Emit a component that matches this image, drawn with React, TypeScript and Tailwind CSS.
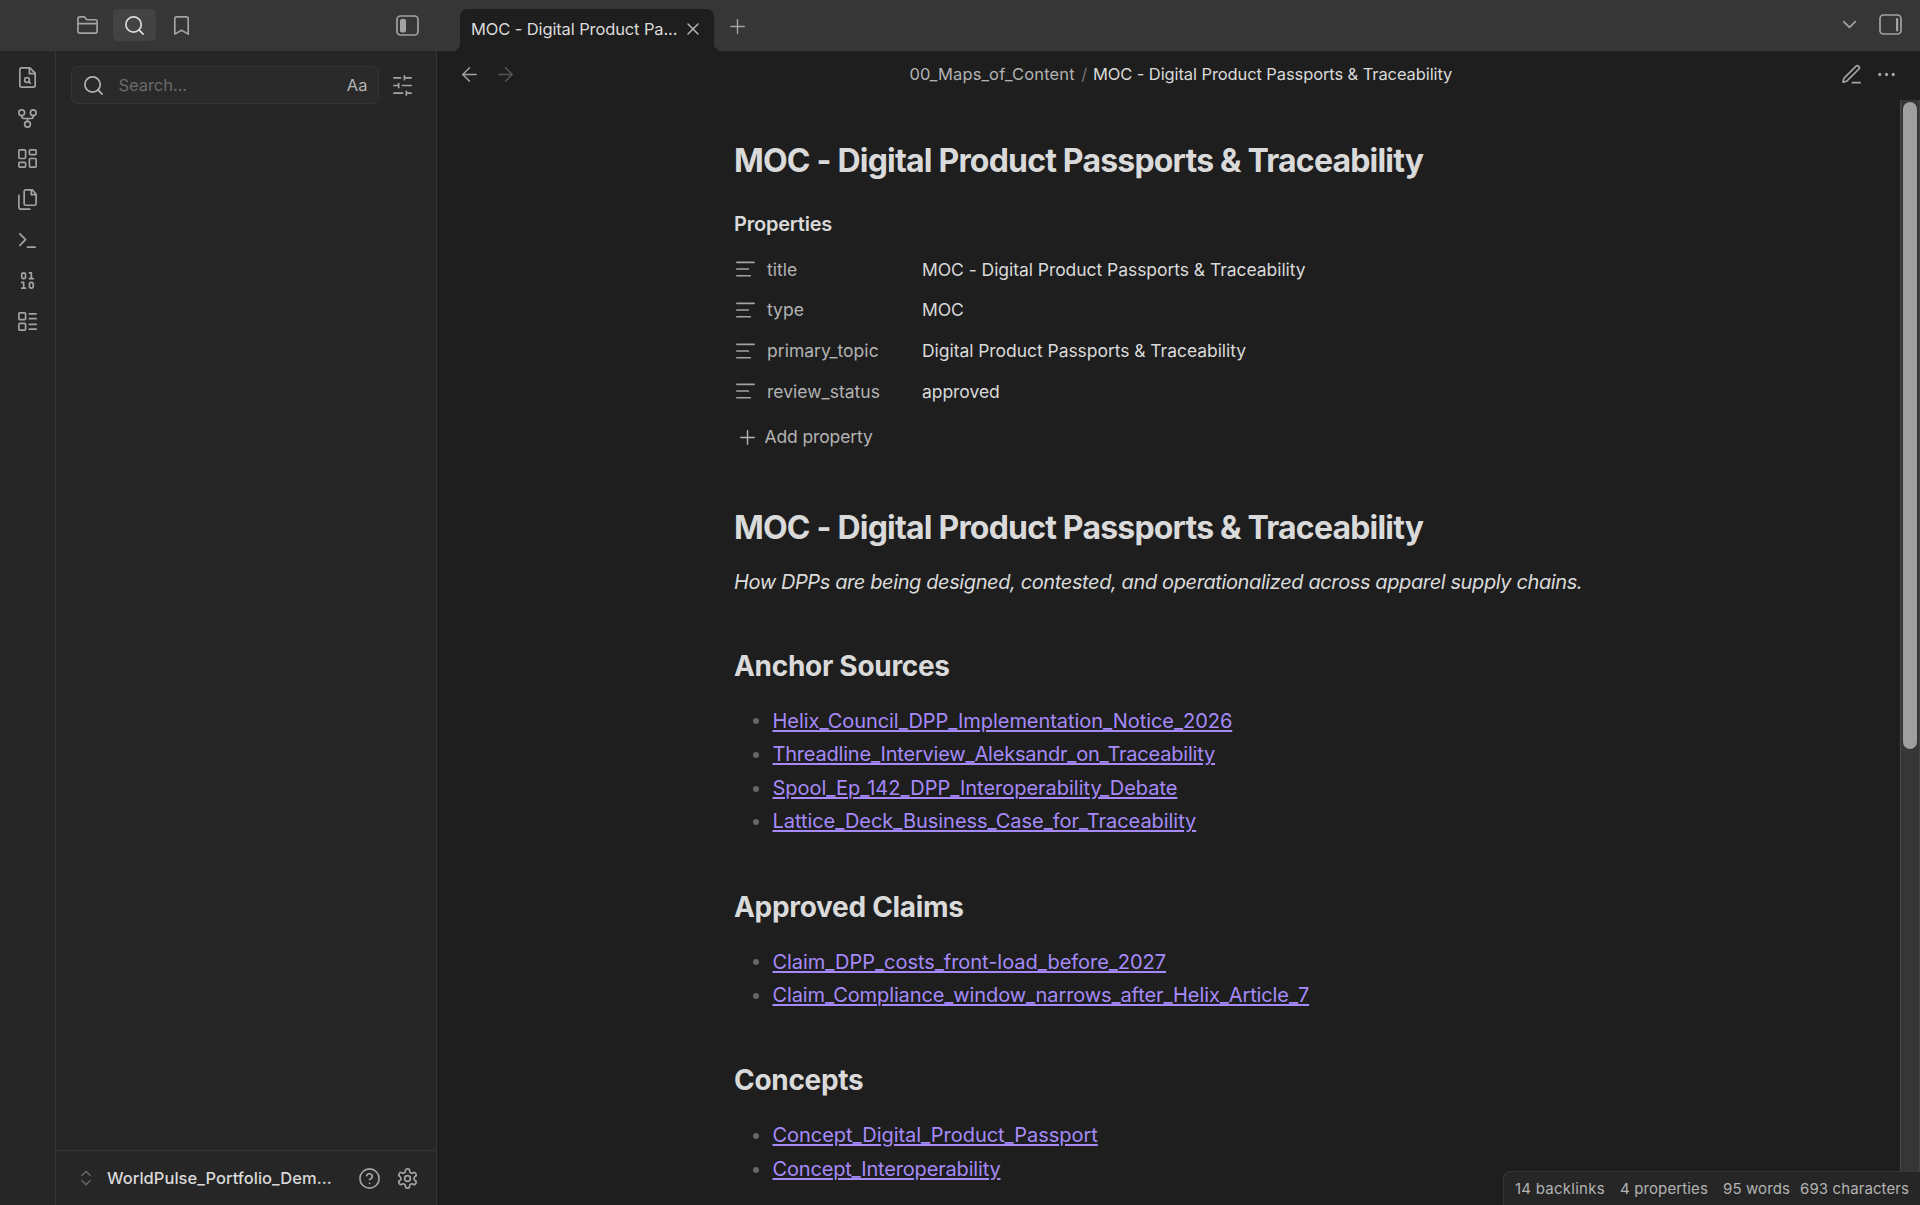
import type { ReactNode } from 'react';
import { Bookmark, ChevronDown, LayoutDashboard, Plus, Search, X, ArrowLeft, ArrowRight, ChevronsUpDown } from 'lucide-react';

interface IconProps {
  className?: string;
  children: ReactNode;
}

function Icon({ className = 'size-[23px]', children }: IconProps) {
  return (
    <svg
      viewBox="0 0 24 24"
      fill="none"
      stroke="currentColor"
      strokeWidth={1.75}
      strokeLinecap="round"
      strokeLinejoin="round"
      className={`shrink-0 ${className}`}
    >
      {children}
    </svg>
  );
}

const ribbonItems: { name: string; icon: ReactNode }[] = [
  {
    name: 'switcher',
    icon: (
      <Icon>
        <path d="M14.5 2H6a2 2 0 0 0-2 2v16a2 2 0 0 0 2 2h12a2 2 0 0 0 2-2V7.5L14.5 2z" />
        <path d="M14 2v6h6" />
        <circle cx="11.5" cy="14.5" r="2.5" />
        <path d="M13.25 16.25 15 18" />
      </Icon>
    ),
  },
  {
    name: 'graph',
    icon: (
      <Icon>
        <circle cx="12" cy="18" r="3" />
        <circle cx="6" cy="6" r="3" />
        <circle cx="18" cy="6" r="3" />
        <path d="M18 9v1a2 2 0 0 1-2 2H8a2 2 0 0 1-2-2V9" />
        <path d="M12 12v3" />
      </Icon>
    ),
  },
  { name: 'canvas', icon: <LayoutDashboard className="size-[23px]" strokeWidth={1.75} /> },
  {
    name: 'templates',
    icon: (
      <Icon>
        <path d="M17 2h-6.9c-.4 0-.8.2-1.1.5-.3.3-.5.7-.5 1.1v12.8c0 .4.2.8.5 1.1.3.3.7.5 1.1.5h9.3c.4 0 .8-.2 1.1-.5.3-.3.5-.7.5-1.1V6.5L17 2z" />
        <path d="M3 7.6v12.8c0 .4.2.8.5 1.1.3.3.7.5 1.1.5h9.8" />
        <path d="M16 2v5h5" />
      </Icon>
    ),
  },
  {
    name: 'commands',
    icon: (
      <Icon>
        <path d="m4 17 6-6-6-6" />
        <path d="M12 19h8" />
      </Icon>
    ),
  },
  {
    name: 'binary',
    icon: (
      <Icon>
        <rect x="6" y="4" width="4" height="6" rx="2" />
        <rect x="14" y="14" width="4" height="6" rx="2" />
        <path d="M6 20h4M14 10h4M6 14h2v6M14 4h2v6" />
      </Icon>
    ),
  },
  {
    name: 'bases',
    icon: (
      <Icon>
        <rect x="3" y="3" width="7" height="7" rx="1" />
        <rect x="3" y="14" width="7" height="7" rx="1" />
        <path d="M14 4h7M14 9h7M14 15h7M14 20h7" />
      </Icon>
    ),
  },
];

const properties = [
  { key: 'title', value: 'MOC - Digital Product Passports & Traceability' },
  { key: 'type', value: 'MOC' },
  { key: 'primary_topic', value: 'Digital Product Passports & Traceability' },
  { key: 'review_status', value: 'approved' },
];

const sections = [
  {
    heading: 'Anchor Sources',
    links: [
      { label: 'Helix_Council_DPP_Implementation_Notice_2026', tracking: 'tracking-[-0.05px]' },
      { label: 'Threadline_Interview_Aleksandr_on_Traceability', tracking: 'tracking-[-0.2px]' },
      { label: 'Spool_Ep_142_DPP_Interoperability_Debate', tracking: 'tracking-[-0.02px]' },
      { label: 'Lattice_Deck_Business_Case_for_Traceability', tracking: 'tracking-[-0.05px]' },
    ],
  },
  {
    heading: 'Approved Claims',
    links: [
      { label: 'Claim_DPP_costs_front-load_before_2027', tracking: 'tracking-[-0.04px]' },
      { label: 'Claim_Compliance_window_narrows_after_Helix_Article_7', tracking: 'tracking-[-0.11px]' },
    ],
  },
  {
    heading: 'Concepts',
    links: [
      { label: 'Concept_Digital_Product_Passport', tracking: 'tracking-[-0.04px]' },
      { label: 'Concept_Interoperability', tracking: 'tracking-[-0.17px]' },
    ],
  },
];

function SidebarToggle({ side }: { side: 'left' | 'right' }) {
  return (
    <svg viewBox="0 0 23 21" fill="none" className="h-[21px] w-[23px] shrink-0">
      <rect x="1" y="1" width="21" height="19" rx="3.5" stroke="currentColor" strokeWidth="1.7" />
      {side === 'left' ? (
        <rect x="4" y="4" width="6" height="13.5" rx="1.8" fill="currentColor" />
      ) : (
        <rect x="17" y="4" width="2.2" height="13.5" rx="1.1" fill="currentColor" />
      )}
    </svg>
  );
}

function TitleBar() {
  return (
    <div className="flex h-[51px] shrink-0 bg-[#363636] text-[#a3a3a3]">
      <div className="flex w-[437px] items-start">
        <div className="ml-[70px] mt-[9px] flex h-8 items-center">
          <div className="flex w-[35px] justify-center">
            <Icon>
              <path d="M20 20a2 2 0 0 0 2-2V8a2 2 0 0 0-2-2h-7.9a2 2 0 0 1-1.69-.9L9.6 3.9A2 2 0 0 0 7.93 3H4a2 2 0 0 0-2 2v13a2 2 0 0 0 2 2Z" />
              <path d="M2 10h20" />
            </Icon>
          </div>
          <div className="ml-2 flex h-8 w-[43px] items-center justify-center rounded-[5px] bg-[#434343] text-[#dadada]">
            <Search className="size-[23px]" strokeWidth={1.75} />
          </div>
          <div className="ml-[7px] flex w-[36px] justify-center">
            <Bookmark className="size-[23px]" strokeWidth={1.75} />
          </div>
        </div>
        <div className="ml-auto mr-[18px] mt-[15px]">
          <SidebarToggle side="left" />
        </div>
      </div>

      <div className="flex flex-1 items-end">
        <div className="relative ml-[23px] flex h-[42px] w-[254px] items-center rounded-t-lg bg-[#1e1e1e] pb-[2px] pl-[11px]">
          <span className="absolute -left-2 bottom-0 size-2 overflow-hidden">
            <span className="block size-2 rounded-br-lg shadow-[4px_4px_0_0_#1e1e1e]" />
          </span>
          <span className="absolute -right-2 bottom-0 size-2 overflow-hidden">
            <span className="block size-2 rounded-bl-lg shadow-[-4px_4px_0_0_#1e1e1e]" />
          </span>
          <span className="whitespace-nowrap text-[16.5px] tracking-[-0.12px] text-[#dadada]">MOC - Digital Product Pa...</span>
          <X className="ml-auto mr-[11px] size-[20px] text-[#b3b3b3]" strokeWidth={1.75} />
        </div>
        <Plus className="mb-[13px] ml-[12px] size-[23px]" strokeWidth={1.5} />
        <div className="mb-[15px] ml-auto mr-[18px] flex items-center">
          <ChevronDown className="mr-[18px] size-[23px]" strokeWidth={1.75} />
          <SidebarToggle side="right" />
        </div>
      </div>
    </div>
  );
}

function Ribbon() {
  return (
    <div className="flex w-[56px] shrink-0 flex-col items-center border-r border-[#363636] bg-[#262626] pt-[6.2px] text-[#a3a3a3]">
      {ribbonItems.map((item) => (
        <div key={item.name} className="flex h-[40.7px] items-center justify-center">
          {item.icon}
        </div>
      ))}
    </div>
  );
}

function SearchPane() {
  return (
    <div className="flex w-[381px] shrink-0 flex-col border-r border-[#363636] bg-[#262626]">
      <div className="mt-[15px] flex items-center pl-[15px]">
        <div className="flex h-[38px] w-[308px] items-center rounded-[6px] border border-[#333333] bg-[#2a2a2a] pl-[9.5px] pr-[10.5px]">
          <Search className="size-[23px] text-[#b3b3b3]" strokeWidth={1.75} />
          <span className="ml-[14px] pt-px text-[16.5px] tracking-[-0.05px] text-[#6a6a6a]">Search...</span>
          <span className="ml-auto pt-px text-[16.5px] text-[#b3b3b3]">Aa</span>
        </div>
        <Icon className="ml-[12px] size-[23px] text-[#a3a3a3]">
          <path d="M21 4h-7M10 4H3M21 12h-9M8 12H3M21 20h-5M12 20H3M14 2v4M8 10v4M16 18v4" />
        </Icon>
      </div>

      <div className="mt-auto flex h-[55px] items-center border-t border-[#363636] text-[#a3a3a3]">
        <ChevronsUpDown className="ml-[20px] size-[20px] text-[#666666]" strokeWidth={1.75} />
        <span className="ml-[11px] whitespace-nowrap text-[16.5px] font-medium tracking-[0.03px] text-[#dadada]">
          WorldPulse_Portfolio_Dem...
        </span>
        <div className="ml-auto mr-[17px] flex gap-[15px]">
          <Icon>
            <circle cx="12" cy="12" r="10" />
            <path d="M9.09 9a3 3 0 0 1 5.83 1c0 2-3 3-3 3M12 17h.01" />
          </Icon>
          <Icon>
            <path d="M12.22 2h-.44a2 2 0 0 0-2 2v.18a2 2 0 0 1-1 1.73l-.43.25a2 2 0 0 1-2 0l-.15-.08a2 2 0 0 0-2.73.73l-.22.38a2 2 0 0 0 .73 2.73l.15.1a2 2 0 0 1 1 1.72v.51a2 2 0 0 1-1 1.74l-.15.09a2 2 0 0 0-.73 2.73l.22.38a2 2 0 0 0 2.73.73l.15-.08a2 2 0 0 1 2 0l.43.25a2 2 0 0 1 1 1.73V20a2 2 0 0 0 2 2h.44a2 2 0 0 0 2-2v-.18a2 2 0 0 1 1-1.73l.43-.25a2 2 0 0 1 2 0l.15.08a2 2 0 0 0 2.73-.73l.22-.39a2 2 0 0 0-.73-2.73l-.15-.08a2 2 0 0 1-1-1.74v-.5a2 2 0 0 1 1-1.74l.15-.09a2 2 0 0 0 .73-2.73l-.22-.38a2 2 0 0 0-2.73-.73l-.15.08a2 2 0 0 1-2 0l-.43-.25a2 2 0 0 1-1-1.73V4a2 2 0 0 0-2-2z" />
            <circle cx="12" cy="12" r="3" />
          </Icon>
        </div>
      </div>
    </div>
  );
}

function ViewHeader() {
  return (
    <div className="flex h-[47px] shrink-0 items-center text-[#a3a3a3]">
      <ArrowLeft className="ml-[21px] size-[23px]" strokeWidth={1.5} />
      <ArrowRight className="ml-[13px] size-[23px] text-[#555555]" strokeWidth={1.5} />
      <div className="ml-[392.5px] flex whitespace-nowrap text-[16.5px] text-[#b3b3b3]">
        <span className="w-[166px] tracking-[0.12px]">00_Maps_of_Content</span>
        <span className="w-[17.5px] text-center text-[#777777]">/</span>
        <span className="tracking-[-0.1px] text-[#dadada]">MOC - Digital Product Passports &amp; Traceability</span>
      </div>
      <Icon className="ml-auto mr-[12px] size-[23px]">
        <path d="M13 20.5h8" />
        <path d="M16.5 3.5a2.12 2.12 0 0 1 3 3L7 19l-4 1 1-4Z" />
      </Icon>
      <Icon className="mr-[22px] size-[23px]">
        <g fill="currentColor" strokeWidth={1.4}>
          <circle cx="12" cy="12" r="1" />
          <circle cx="19" cy="12" r="1" />
          <circle cx="5" cy="12" r="1" />
        </g>
      </Icon>
    </div>
  );
}

function Note() {
  return (
    <div className="flex min-h-0 flex-1 overflow-hidden">
      <div className="w-[1463px] shrink-0 whitespace-nowrap pl-[297px] text-[#dadada]">
        <h1 className="mt-[43.2px] text-[32px] font-bold leading-10 tracking-[-0.8px]">
          MOC - Digital Product Passports &amp; Traceability
        </h1>

        <div className="mt-[28px] text-[20px] font-semibold leading-[30px] tracking-[-0.22px]">Properties</div>
        <div className="mt-[10.1px]">
          {properties.map((property) => (
            <div key={property.key} className="flex h-[40.7px] items-center text-[17.5px]">
              <Icon className="size-[23px] text-[#a3a3a3]">
                <path d="M21 4.5H3M15 11.5H3M17 18.5H3" />
              </Icon>
              <span className="ml-[10px] w-[155px] tracking-[0.03px] text-[#b3b3b3]">{property.key}</span>
              <span className="tracking-[-0.05px]">{property.value}</span>
            </div>
          ))}
        </div>
        <div className="mt-[5.5px] flex h-10 items-center text-[17.5px] tracking-[-0.12px] text-[#b3b3b3]">
          <Plus className="ml-[2px] size-[23px]" strokeWidth={1.5} />
          <span className="ml-[5.5px]">Add property</span>
        </div>

        <h1 className="mt-[50.2px] text-[32px] font-bold leading-10 tracking-[-0.8px]">
          MOC - Digital Product Passports &amp; Traceability
        </h1>
        <p className="mt-[18.2px] text-[20px] italic leading-[33.5px] tracking-[-0.39px]">
          How DPPs are being designed, contested, and operationalized across apparel supply chains.
        </p>

        {sections.map((section) => (
          <section key={section.heading} className="pt-[49.6px] first-of-type:pt-[48.2px]">
            <h2 className="text-[28px] font-bold leading-9 tracking-[-0.3px]">{section.heading}</h2>
            <ul className="mt-[21px] text-[20px] leading-[33.6px]">
              {section.links.map((link) => (
                <li key={link.label} className="flex items-center">
                  <span className="ml-[19px] mr-[13.5px] size-[6px] rounded-full bg-[#666666]" />
                  <a className={`text-[#a68af9] underline decoration-2 underline-offset-2 ${link.tracking}`}>{link.label}</a>
                </li>
              ))}
            </ul>
          </section>
        ))}
      </div>

      <div className="mt-[2px] flex flex-1 justify-center border-x border-l-[#4a4a4a] border-r-[#444444] bg-[#363636]">
        <div className="mt-[2px] h-[647px] w-[14px] rounded-full bg-[#9f9f9f]" />
      </div>
    </div>
  );
}

export default function App() {
  return (
    <div className="relative flex h-[1205px] w-[1920px] flex-col overflow-hidden bg-[#1e1e1e] font-['Inter',sans-serif]">
      <TitleBar />
      <div className="flex min-h-0 flex-1">
        <Ribbon />
        <SearchPane />
        <main className="flex min-w-0 flex-1 flex-col">
          <ViewHeader />
          <Note />
        </main>
      </div>

      <div className="absolute bottom-0 right-0 flex h-[34px] w-[417px] items-center whitespace-nowrap rounded-tl-lg border-l border-t border-[#363636] bg-[#262626] pl-[11px] pt-px text-[15px] text-[#b3b3b3]">
        <span className="w-[105px] tracking-[0.25px]">14 backlinks</span>
        <span className="w-[103px] tracking-[0.12px]">4 properties</span>
        <span className="w-[77px] tracking-[0.1px]">95 words</span>
        <span className="tracking-[0.1px]">693 characters</span>
      </div>
    </div>
  );
}
